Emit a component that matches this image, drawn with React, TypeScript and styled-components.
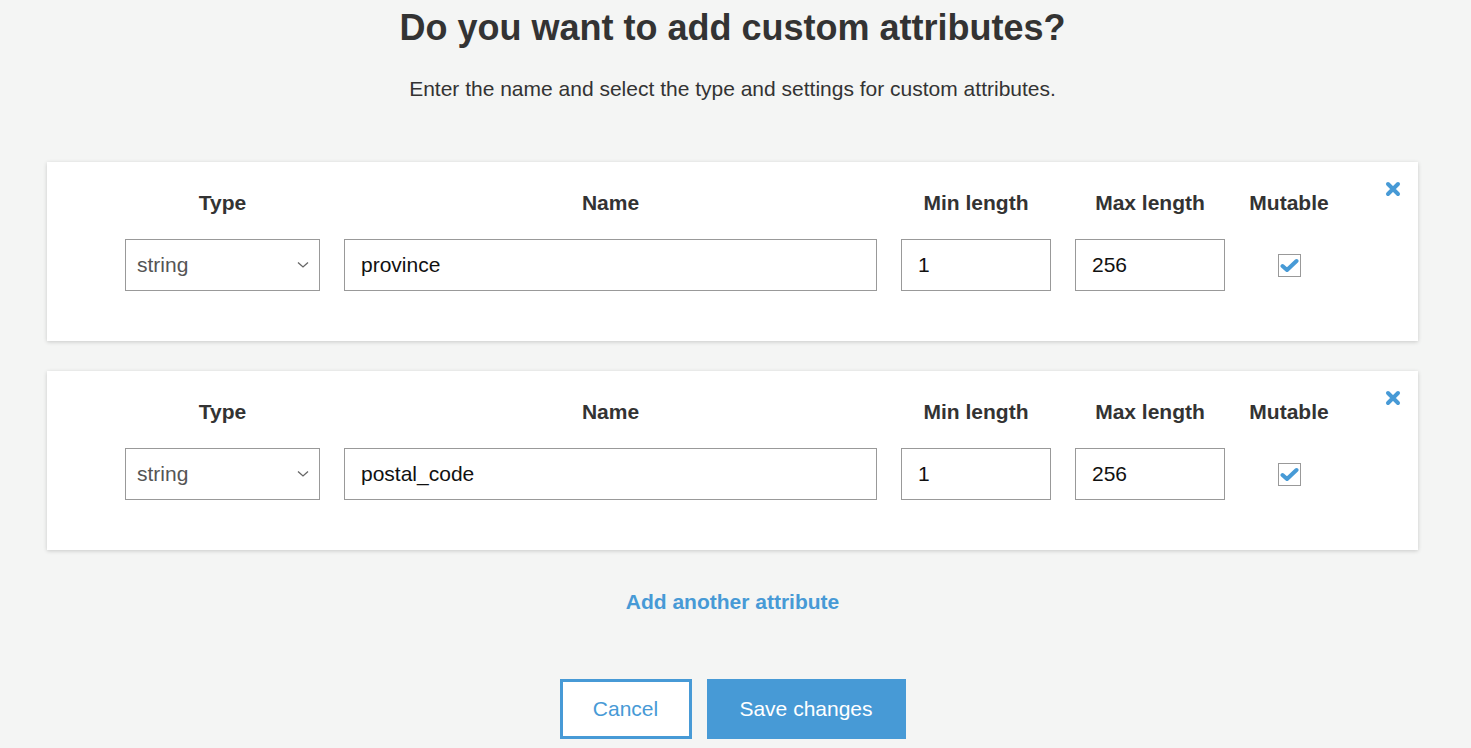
import styled, { createGlobalStyle } from "styled-components";

const GlobalStyle = createGlobalStyle`
  body {
    margin: 0;
    background: #f4f5f4;
    font-family: "Liberation Sans", Arial, sans-serif;
    color: #333;
  }
`;

const Page = styled.main`
  padding: 8px 53px 0 47px;
  display: flex;
  flex-direction: column;
  align-items: stretch;
`;

const Title = styled.h1`
  margin: 0;
  text-align: center;
  font-size: 36px;
  line-height: 40px;
  font-weight: 700;
  color: #333;
`;

const Intro = styled.p`
  margin: 30px 0 0;
  text-align: center;
  font-size: 21px;
  line-height: 22px;
  color: #333;
`;

const CardList = styled.div`
  margin-top: 62px;
  display: flex;
  flex-direction: column;
  gap: 30px;
`;

const Card = styled.section`
  position: relative;
  background: #fff;
  box-shadow: 0 1px 4px rgba(0, 0, 0, 0.18);
  padding: 30px 0 50px 78px;
`;

const FieldGrid = styled.div`
  display: grid;
  grid-template-columns: 195px 533px 150px 150px 80px;
  column-gap: 24px;
  row-gap: 25px;
  align-items: center;
`;

const Label = styled.div`
  text-align: center;
  font-weight: 700;
  font-size: 21px;
  line-height: 22px;
  color: #333;
`;

const TextInput = styled.input`
  box-sizing: border-box;
  width: 100%;
  height: 52px;
  border: 1px solid #999;
  padding: 0 16px;
  font-family: inherit;
  font-size: 21px;
  color: #111;
  background: #fff;
  outline: none;
`;

const SelectBox = styled.div`
  box-sizing: border-box;
  height: 52px;
  border: 1px solid #999;
  padding: 0 10px 0 11px;
  display: flex;
  align-items: center;
  justify-content: space-between;
  font-size: 21px;
  color: #555;
  background: #fff;
`;

const CheckCell = styled.div`
  display: flex;
  justify-content: center;
`;

const CheckBox = styled.span`
  box-sizing: border-box;
  width: 23px;
  height: 23px;
  border: 1px solid #999;
  display: flex;
  align-items: center;
  justify-content: center;
  background: #fff;
`;

const RemoveButton = styled.button`
  position: absolute;
  top: 19px;
  right: 17px;
  border: 0;
  padding: 0;
  background: none;
  cursor: pointer;
  display: flex;
`;

const AddLink = styled.a`
  margin-top: 40px;
  align-self: center;
  font-size: 21px;
  line-height: 24px;
  font-weight: 700;
  color: #479ad6;
  text-decoration: none;
  cursor: pointer;
`;

const Actions = styled.div`
  margin-top: 65px;
  display: flex;
  justify-content: center;
  gap: 15px;
`;

const Button = styled.button<{ $primary?: boolean }>`
  box-sizing: border-box;
  height: 60px;
  width: ${(p) => (p.$primary ? "199px" : "132px")};
  font-family: inherit;
  font-size: 21px;
  cursor: pointer;
  border: ${(p) => (p.$primary ? "0" : "3px solid #479ad6")};
  background: ${(p) => (p.$primary ? "#479ad6" : "#fff")};
  color: ${(p) => (p.$primary ? "#fff" : "#479ad6")};
`;

const Chevron = () => (
  <svg width="12" height="8" viewBox="0 0 12 8">
    <path d="M1 1.5 L6 6 L11 1.5" fill="none" stroke="#666" strokeWidth="1.3" />
  </svg>
);

const Tick = () => (
  <svg width="19" height="15" viewBox="0 0 19 15">
    <path
      d="M2.5 8 L7 12 L16.5 3"
      fill="none"
      stroke="#479ad6"
      strokeWidth="4"
      strokeLinecap="round"
      strokeLinejoin="round"
    />
  </svg>
);

const Cross = () => (
  <svg width="16" height="16" viewBox="0 0 16 16">
    <path
      d="M3 3 L13 13 M13 3 L3 13"
      stroke="#479ad6"
      strokeWidth="4"
      strokeLinecap="round"
    />
  </svg>
);

const attributes = [
  { name: "province", min: "1", max: "256" },
  { name: "postal_code", min: "1", max: "256" },
];

export default function App() {
  return (
    <>
      <GlobalStyle />
      <Page>
        <Title>Do you want to add custom attributes?</Title>
        <Intro>Enter the name and select the type and settings for custom attributes.</Intro>
        <CardList>
          {attributes.map((a) => (
            <Card key={a.name}>
              <RemoveButton aria-label="Remove attribute">
                <Cross />
              </RemoveButton>
              <FieldGrid>
                <Label>Type</Label>
                <Label>Name</Label>
                <Label>Min length</Label>
                <Label>Max length</Label>
                <Label>Mutable</Label>
                <SelectBox>
                  string
                  <Chevron />
                </SelectBox>
                <TextInput defaultValue={a.name} />
                <TextInput defaultValue={a.min} />
                <TextInput defaultValue={a.max} />
                <CheckCell>
                  <CheckBox>
                    <Tick />
                  </CheckBox>
                </CheckCell>
              </FieldGrid>
            </Card>
          ))}
        </CardList>
        <AddLink>Add another attribute</AddLink>
        <Actions>
          <Button>Cancel</Button>
          <Button $primary>Save changes</Button>
        </Actions>
      </Page>
    </>
  );
}
